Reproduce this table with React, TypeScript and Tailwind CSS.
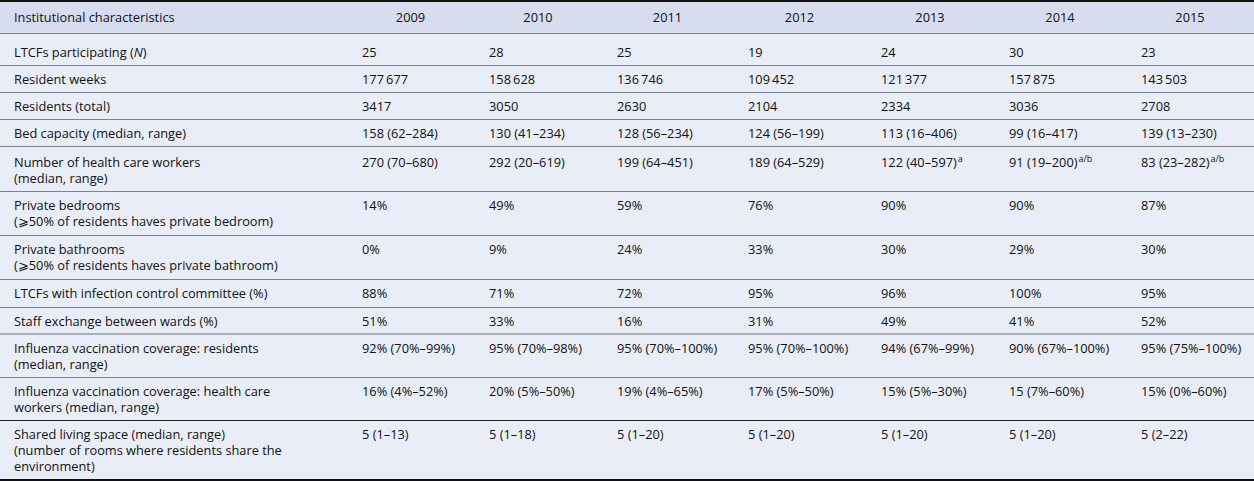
import React from "react";

type Row = {
  label: React.ReactNode[];
  values: React.ReactNode[];
  border?: string;
  pt?: string;
  pb?: string;
};

const sup = (v: string, s: string) => (
  <>
    {v}
    <span className="relative -top-[5px] text-[9px] leading-none ml-px">{s}</span>
  </>
);

const rows: Row[] = [
  {
    label: [
      <>
        LTCFs participating (<i>N</i>)
      </>,
    ],
    values: ["25", "28", "25", "19", "24", "30", "23"],
    pt: "pt-[10px]",
  },
  {
    label: ["Resident weeks"],
    values: ["177\u2009677", "158\u2009628", "136\u2009746", "109\u2009452", "121\u2009377", "157\u2009875", "143\u2009503"],
  },
  {
    label: ["Residents (total)"],
    values: ["3417", "3050", "2630", "2104", "2334", "3036", "2708"],
  },
  {
    label: ["Bed capacity (median, range)"],
    values: ["158 (62–284)", "130 (41–234)", "128 (56–234)", "124 (56–199)", "113 (16–406)", "99 (16–417)", "139 (13–230)"],
  },
  {
    label: ["Number of health care workers", "(median, range)"],
    values: [
      "270 (70–680)",
      "292 (20–619)",
      "199 (64–451)",
      "189 (64–529)",
      sup("122 (40–597)", "a"),
      sup("91 (19–200)", "a/b"),
      sup("83 (23–282)", "a/b"),
    ],
    pt: "pt-[7px]",
  },
  {
    label: ["Private bedrooms", "(⩾50% of residents haves private bedroom)"],
    values: ["14%", "49%", "59%", "76%", "90%", "90%", "87%"],
    pb: "pb-[6px]",
  },
  {
    label: ["Private bathrooms", "(⩾50% of residents haves private bathroom)"],
    values: ["0%", "9%", "24%", "33%", "30%", "29%", "30%"],
    pb: "pb-[6px]",
  },
  {
    label: ["LTCFs with infection control committee (%)"],
    values: ["88%", "71%", "72%", "95%", "96%", "100%", "95%"],
    pb: "pb-[6px]",
  },
  {
    label: ["Staff exchange between wards (%)"],
    values: ["51%", "33%", "16%", "31%", "49%", "41%", "52%"],
    border: "border-b-2 border-b-[#a9adb6]",
    pb: "pb-[4px]",
  },
  {
    label: ["Influenza vaccination coverage: residents", "(median, range)"],
    values: ["92% (70%–99%)", "95% (70%–98%)", "95% (70%–100%)", "95% (70%–100%)", "94% (67%–99%)", "90% (67%–100%)", "95% (75%–100%)"],
  },
  {
    label: ["Influenza vaccination coverage: health care", "workers (median, range)"],
    values: ["16% (4%–52%)", "20% (5%–50%)", "19% (4%–65%)", "17% (5%–50%)", "15% (5%–30%)", "15 (7%–60%)", "15% (0%–60%)"],
    border: "border-b border-b-[#222222]",
  },
  {
    label: ["Shared living space (median, range)", "(number of rooms where residents share the", "environment)"],
    values: ["5 (1–13)", "5 (1–18)", "5 (1–20)", "5 (1–20)", "5 (1–20)", "5 (1–20)", "5 (2–22)"],
    border: "border-b-2 border-b-[#111111]",
  },
];

const years = ["2009", "2010", "2011", "2012", "2013", "2014", "2015"];

export default function App() {
  return (
    <div className="w-[1254px] h-[481px] bg-white font-['Open_Sans','Noto_Sans',sans-serif] text-[12.8px] text-[#111111]">
      <table className="w-[1254px] table-fixed border-collapse bg-[#e9edf7]">
        <colgroup>
          <col className="w-[347px]" />
          <col className="w-[127px]" />
          <col className="w-[128px]" />
          <col className="w-[131px]" />
          <col className="w-[133px]" />
          <col className="w-[128px]" />
          <col className="w-[132px]" />
          <col className="w-[128px]" />
        </colgroup>
        <thead>
          <tr className="bg-[#d7ddee] border-t-2 border-t-[#111111] border-b border-b-[#7d828c]">
            <th className="text-left font-normal pl-[14px] pr-2 pt-[7px] pb-[8px] leading-[16px]">
              Institutional characteristics
            </th>
            {years.map((y) => (
              <th key={y} className="text-center font-normal pt-[7px] pb-[8px] leading-[16px]">
                {y}
              </th>
            ))}
          </tr>
        </thead>
        <tbody>
          {rows.map((r, i) => {
            const pad = `${r.pt ?? "pt-[5px]"} ${r.pb ?? "pb-[5px]"}`;
            return (
              <tr key={i} className={r.border ?? "border-b border-b-[#7d828c]"}>
                <td className={`align-top pl-[14px] pr-2 leading-[16px] ${pad}`}>
                  {r.label.map((l, j) => (
                    <div key={j}>{l}</div>
                  ))}
                </td>
                {r.values.map((v, j) => (
                  <td key={j} className={`align-top pl-[15px] pr-1 leading-[16px] whitespace-nowrap ${pad}`}>
                    {v}
                  </td>
                ))}
              </tr>
            );
          })}
        </tbody>
      </table>
    </div>
  );
}
